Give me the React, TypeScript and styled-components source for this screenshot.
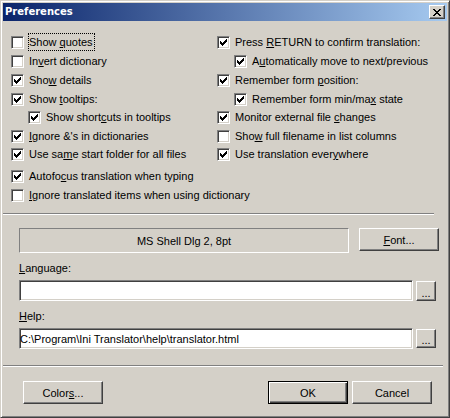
import React from "react";
import styled, { createGlobalStyle } from "styled-components";

const GlobalStyle = createGlobalStyle`
  html, body { margin: 0; padding: 0; }
  body {
    background: #D4D0C8;
    font-family: "Liberation Sans", Arial, sans-serif;
    font-size: 11px;
    color: #000;
  }
  u { text-decoration: underline; text-underline-offset: 1px; }
`;

const Window = styled.div`
  width: 450px;
  height: 418px;
  box-sizing: border-box;
  background: #D4D0C8;
  border: 1px solid;
  border-color: #D4D0C8 #404040 #404040 #D4D0C8;
  box-shadow: inset 1px 1px 0 #ffffff, inset -1px -1px 0 #808080;
  padding: 2px;
  display: flex;
  flex-direction: column;
`;

const TitleBar = styled.div`
  height: 18px;
  flex: none;
  background: linear-gradient(to right, #0A246A, #A6CAF0);
  display: flex;
  align-items: center;
  justify-content: space-between;
  padding: 0 2px;
`;

const Title = styled.span`
  color: #fff;
  font-family: "DejaVu Sans", Verdana, sans-serif;
  font-weight: bold;
  font-size: 10px;
  line-height: 18px;
`;

const CaptionButton = styled.button`
  width: 16px;
  height: 14px;
  padding: 0;
  margin: 0;
  box-sizing: border-box;
  background: #D4D0C8;
  border: 1px solid;
  border-color: #ffffff #404040 #404040 #ffffff;
  box-shadow: inset -1px -1px 0 #808080;
  display: flex;
  align-items: center;
  justify-content: center;
  svg { display: block; }
`;

const Options = styled.div`
  display: grid;
  grid-template-columns: 206px 1fr;
  grid-template-rows: 19px 19px 19px 18px 19px 18px 22px 19px 19px;
  padding: 15px 0 0 8px;
`;

const Option = styled.label<{ $indent?: boolean; $wide?: boolean }>`
  display: flex;
  align-items: flex-start;
  padding-left: ${(p) => (p.$indent ? 17 : 0)}px;
  grid-column: ${(p) => (p.$wide ? "1 / -1" : "auto")};
`;

const Box = styled.span`
  width: 13px;
  height: 13px;
  flex: none;
  box-sizing: border-box;
  background: #fff;
  border: 1px solid;
  border-color: #808080 #ffffff #ffffff #808080;
  box-shadow: inset 1px 1px 0 #404040, inset -1px -1px 0 #D4D0C8;
  padding: 2px;
  svg { display: block; }
`;

const LabelText = styled.span<{ $focus?: boolean }>`
  margin: -3px 0 0 4px;
  padding: 2px 1px 1px 0;
  border: 1px dotted ${(p) => (p.$focus ? "#000" : "transparent")};
  line-height: 13px;
  white-space: nowrap;
`;

const Separator = styled.div<{ $right: number; $top: number }>`
  flex: none;
  height: 0;
  border-top: 1px solid #808080;
  border-bottom: 1px solid #ffffff;
  margin: ${(p) => p.$top}px ${(p) => p.$right}px 0 0;
`;

const Settings = styled.div`
  padding: 13px 0 0 16px;
  display: flex;
  flex-direction: column;
`;

const FontRow = styled.div`
  display: flex;
  align-items: flex-start;
  gap: 10px;
`;

const FontPreview = styled.div`
  width: 330px;
  height: 25px;
  box-sizing: border-box;
  border: 1px solid;
  border-color: #808080 #ffffff #ffffff #808080;
  display: flex;
  align-items: center;
  justify-content: center;
`;

const FieldLabel = styled.div`
  margin-top: 9px;
  line-height: 13px;
`;

const FieldRow = styled.div`
  display: flex;
  align-items: flex-start;
  gap: 3px;
  margin-top: 5px;
`;

const TextInput = styled.input`
  width: 394px;
  height: 21px;
  box-sizing: border-box;
  margin: 0;
  padding: 0;
  background: #fff;
  border: 1px solid;
  border-color: #808080 #ffffff #ffffff #808080;
  box-shadow: inset 1px 1px 0 #404040, inset -1px -1px 0 #D4D0C8;
  font-family: "Liberation Sans", Arial, sans-serif;
  font-size: 11px;
  color: #000;
  outline: none;
`;

const PushButton = styled.button<{ $default?: boolean; $w?: number; $h?: number }>`
  width: ${(p) => p.$w ?? 80}px;
  height: ${(p) => p.$h ?? 23}px;
  flex: none;
  box-sizing: border-box;
  margin: 0;
  padding: 0;
  background: #D4D0C8;
  font-family: "Liberation Sans", Arial, sans-serif;
  font-size: 11px;
  color: #000;
  border: 1px solid;
  border-color: ${(p) => (p.$default ? "#000000" : "#ffffff #404040 #404040 #ffffff")};
  box-shadow: ${(p) =>
    p.$default
      ? "inset 1px 1px 0 #ffffff, inset -1px -1px 0 #404040, inset -2px -2px 0 #808080"
      : "inset -1px -1px 0 #808080"};
`;

const EllipsisButton = styled(PushButton)`
  margin-top: 1px;
  line-height: 14px;
  padding-top: 3px;
`;

const ButtonBar = styled.div`
  display: flex;
  align-items: flex-start;
  gap: 4px;
  margin-top: 14px;
  padding: 0 15px 0 20px;
  > :nth-child(2) { margin-left: auto; }
`;

const Check = () => (
  <svg width="7" height="7" viewBox="0 0 7 7" shapeRendering="crispEdges">
    <g fill="#000">
      <rect x="6" y="0" width="1" height="1" />
      <rect x="5" y="1" width="2" height="1" />
      <rect x="0" y="2" width="1" height="1" />
      <rect x="4" y="2" width="3" height="1" />
      <rect x="0" y="3" width="2" height="1" />
      <rect x="3" y="3" width="3" height="1" />
      <rect x="0" y="4" width="5" height="1" />
      <rect x="1" y="5" width="3" height="1" />
      <rect x="2" y="6" width="1" height="1" />
    </g>
  </svg>
);

const CloseGlyph = () => (
  <svg width="8" height="7" viewBox="0 0 8 7" shapeRendering="crispEdges">
    <g fill="#000">
      <rect x="0" y="0" width="2" height="1" />
      <rect x="6" y="0" width="2" height="1" />
      <rect x="1" y="1" width="2" height="1" />
      <rect x="5" y="1" width="2" height="1" />
      <rect x="2" y="2" width="4" height="1" />
      <rect x="3" y="3" width="2" height="1" />
      <rect x="2" y="4" width="4" height="1" />
      <rect x="1" y="5" width="2" height="1" />
      <rect x="5" y="5" width="2" height="1" />
      <rect x="0" y="6" width="2" height="1" />
      <rect x="6" y="6" width="2" height="1" />
    </g>
  </svg>
);

type Opt = { pre: string; key: string; post: string; checked: boolean; indent?: boolean; wide?: boolean; focus?: boolean };

const options: Opt[] = [
  { pre: "Show ", key: "q", post: "uotes", checked: false, focus: true },
  { pre: "Press ", key: "R", post: "ETURN to confirm translation:", checked: true },
  { pre: "In", key: "v", post: "ert dictionary", checked: false },
  { pre: "A", key: "u", post: "tomatically move to next/previous", checked: true, indent: true },
  { pre: "Sho", key: "w", post: " details", checked: true },
  { pre: "Remember form ", key: "p", post: "osition:", checked: true },
  { pre: "Show ", key: "t", post: "ooltips:", checked: true },
  { pre: "Remember form min/ma", key: "x", post: " state", checked: true, indent: true },
  { pre: "Show short", key: "c", post: "uts in tooltips", checked: true, indent: true },
  { pre: "Monitor external file ", key: "c", post: "hanges", checked: true },
  { pre: "", key: "I", post: "gnore &'s in dictionaries", checked: true },
  { pre: "Sho", key: "w", post: " full filename in list columns", checked: false },
  { pre: "Use sa", key: "m", post: "e start folder for all files", checked: true },
  { pre: "Use translation ever", key: "y", post: "where", checked: true },
  { pre: "Autofo", key: "c", post: "us translation when typing", checked: true, wide: true },
  { pre: "", key: "I", post: "gnore translated items when using dictionary", checked: false, wide: true },
];

export default function App() {
  return (
    <>
      <GlobalStyle />
      <Window>
        <TitleBar>
          <Title>Preferences</Title>
          <CaptionButton aria-label="Close">
            <CloseGlyph />
          </CaptionButton>
        </TitleBar>

        <Options>
          {options.map((o, i) => (
            <Option key={i} $indent={o.indent} $wide={o.wide}>
              <Box>{o.checked && <Check />}</Box>
              <LabelText $focus={o.focus}>
                {o.pre}
                <u>{o.key}</u>
                {o.post}
              </LabelText>
            </Option>
          ))}
        </Options>

        <Separator $top={5} $right={13} />

        <Settings>
          <FontRow>
            <FontPreview>MS Shell Dlg 2, 8pt</FontPreview>
            <PushButton>
              <u>F</u>ont...
            </PushButton>
          </FontRow>

          <FieldLabel>
            <u>L</u>anguage:
          </FieldLabel>
          <FieldRow>
            <TextInput defaultValue="" />
            <EllipsisButton $w={20} $h={20}>...</EllipsisButton>
          </FieldRow>

          <FieldLabel>
            <u>H</u>elp:
          </FieldLabel>
          <FieldRow>
            <TextInput defaultValue="C:\Program\Ini Translator\help\translator.html" />
            <EllipsisButton $w={20} $h={19}>...</EllipsisButton>
          </FieldRow>
        </Settings>

        <Separator $top={16} $right={4} />

        <ButtonBar>
          <PushButton>
            Color<u>s</u>...
          </PushButton>
          <PushButton $default>OK</PushButton>
          <PushButton>Cancel</PushButton>
        </ButtonBar>
      </Window>
    </>
  );
}
